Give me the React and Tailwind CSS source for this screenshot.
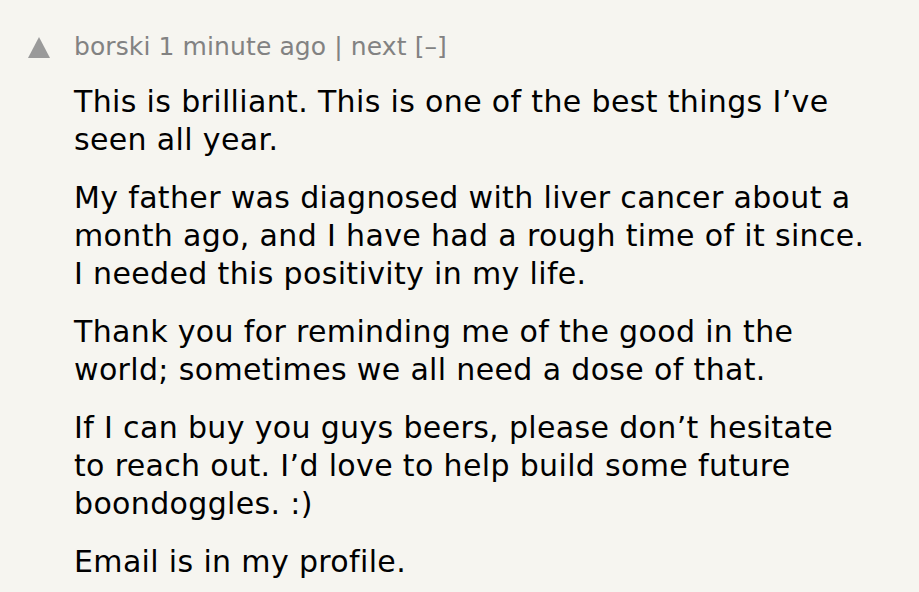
import React from 'react';

const paragraphs = [
  'This is brilliant. This is one of the best things I’ve seen all year.',
  'My father was diagnosed with liver cancer about a month ago, and I have had a rough time of it since. I needed this positivity in my life.',
  'Thank you for reminding me of the good in the world; sometimes we all need a dose of that.',
  'If I can buy you guys beers, please don’t hesitate to reach out. I’d love to help build some future boondoggles. :)',
  'Email is in my profile.',
];

export default function App() {
  return (
    <div
      className="min-h-screen w-full bg-[#f6f5f0] overflow-hidden"
      style={{ fontFamily: '"DejaVu Sans", Verdana, sans-serif' }}
    >
      <div className="flex pt-[33px]">
        {/* vote arrow */}
        <div className="w-[74px] shrink-0 flex justify-start pl-[28px] pt-[4px]">
          <svg width="22" height="21" viewBox="0 0 22 21">
            <polygon points="11,0 22,21 0,21" fill="#9a9a9a" />
          </svg>
        </div>
        <div className="w-[794px]">
          <div className="text-[25px] leading-[28px] text-[#828282] tracking-[0.1px]">
            borski 1 minute ago | next [–]
          </div>
          <div className="mt-[22px] text-[30px] leading-[38px] text-black tracking-[0.35px]">
            {paragraphs.map((p, i) => (
              <p key={i} className={i === 0 ? '' : 'mt-[20px]'}>
                {p}
              </p>
            ))}
          </div>
        </div>
      </div>
    </div>
  );
}
